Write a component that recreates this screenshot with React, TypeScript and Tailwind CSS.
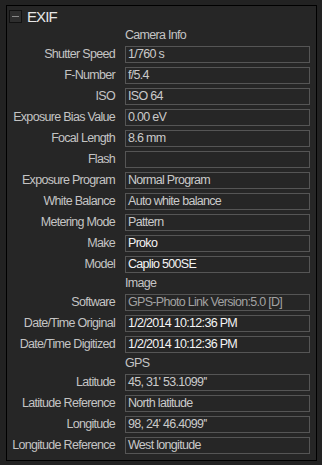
import React from "react";

type Row =
  | { kind: "head"; text: string }
  | { kind: "field"; label: string; value: string; tone?: "bright" | "dim" | "normal" };

const rows: Row[] = [
  { kind: "head", text: "Camera Info" },
  { kind: "field", label: "Shutter Speed", value: "1/760 s" },
  { kind: "field", label: "F-Number", value: "f/5.4" },
  { kind: "field", label: "ISO", value: "ISO 64" },
  { kind: "field", label: "Exposure Bias Value", value: "0.00 eV" },
  { kind: "field", label: "Focal Length", value: "8.6 mm" },
  { kind: "field", label: "Flash", value: "" },
  { kind: "field", label: "Exposure Program", value: "Normal Program" },
  { kind: "field", label: "White Balance", value: "Auto white balance" },
  { kind: "field", label: "Metering Mode", value: "Pattern" },
  { kind: "field", label: "Make", value: "Proko", tone: "bright" },
  { kind: "field", label: "Model", value: "Caplio 500SE", tone: "bright" },
  { kind: "head", text: "Image" },
  { kind: "field", label: "Software", value: "GPS-Photo Link Version:5.0 [D]", tone: "dim" },
  { kind: "field", label: "Date/Time Original", value: "1/2/2014 10:12:36 PM", tone: "bright" },
  { kind: "field", label: "Date/Time Digitized", value: "1/2/2014 10:12:36 PM", tone: "bright" },
  { kind: "head", text: "GPS" },
  { kind: "field", label: "Latitude", value: "45, 31' 53.1099''" },
  { kind: "field", label: "Latitude Reference", value: "North latitude" },
  { kind: "field", label: "Longitude", value: "98, 24' 46.4099''" },
  { kind: "field", label: "Longitude Reference", value: "West longitude" },
];

const font = {
  fontFamily: '"Liberation Sans", Arial, sans-serif',
};

export default function App() {
  return (
    <div
      className="w-[322px] h-[465px] bg-[#222222] pt-[5px] pl-[6px] pr-[5px] pb-[4px] overflow-hidden"
      style={font}
    >
      <div className="w-full h-full border border-black bg-[#262626] flex flex-col">
        <div className="h-[18px] flex items-center pl-[2px] mt-[1px]">
          <div className="w-[13px] h-[13px] border border-[#111] bg-[#2e2e2e] flex items-center justify-center">
            <div className="w-[7px] h-[1px] bg-[#8a8a8a]" />
          </div>
          <span className="ml-[5px] text-[15px] leading-none tracking-[-0.9px] text-[#e6e6e6]">EXIF</span>
        </div>
        <div className="flex flex-col gap-[4px] mt-[4px] pr-[6px]">
          {rows.map((r, i) =>
            r.kind === "head" ? (
              <div key={i} className="flex h-[13px] items-center">
                <div className="w-[118px] shrink-0" />
                <span className="text-[12.5px] leading-none tracking-[-0.7px] text-[#c4c4c4]">{r.text}</span>
              </div>
            ) : (
              <div key={i} className="flex h-[17px] items-center">
                <div className="w-[108px] shrink-0 text-right text-[12.5px] leading-none tracking-[-0.7px] text-[#c4c4c4] whitespace-nowrap">
                  {r.label}
                </div>
                <div className="ml-[10px] flex-1 h-[17px] border border-[#555555] flex items-center pl-[2px]">
                  <span
                    className={
                      "text-[12.5px] leading-none tracking-[-0.7px] whitespace-nowrap " +
                      (r.tone === "bright"
                        ? "text-[#f4f4f4]"
                        : r.tone === "dim"
                        ? "text-[#a2a2a2]"
                        : "text-[#cacaca]")
                    }
                  >
                    {r.value}
                  </span>
                </div>
              </div>
            )
          )}
        </div>
      </div>
    </div>
  );
}
